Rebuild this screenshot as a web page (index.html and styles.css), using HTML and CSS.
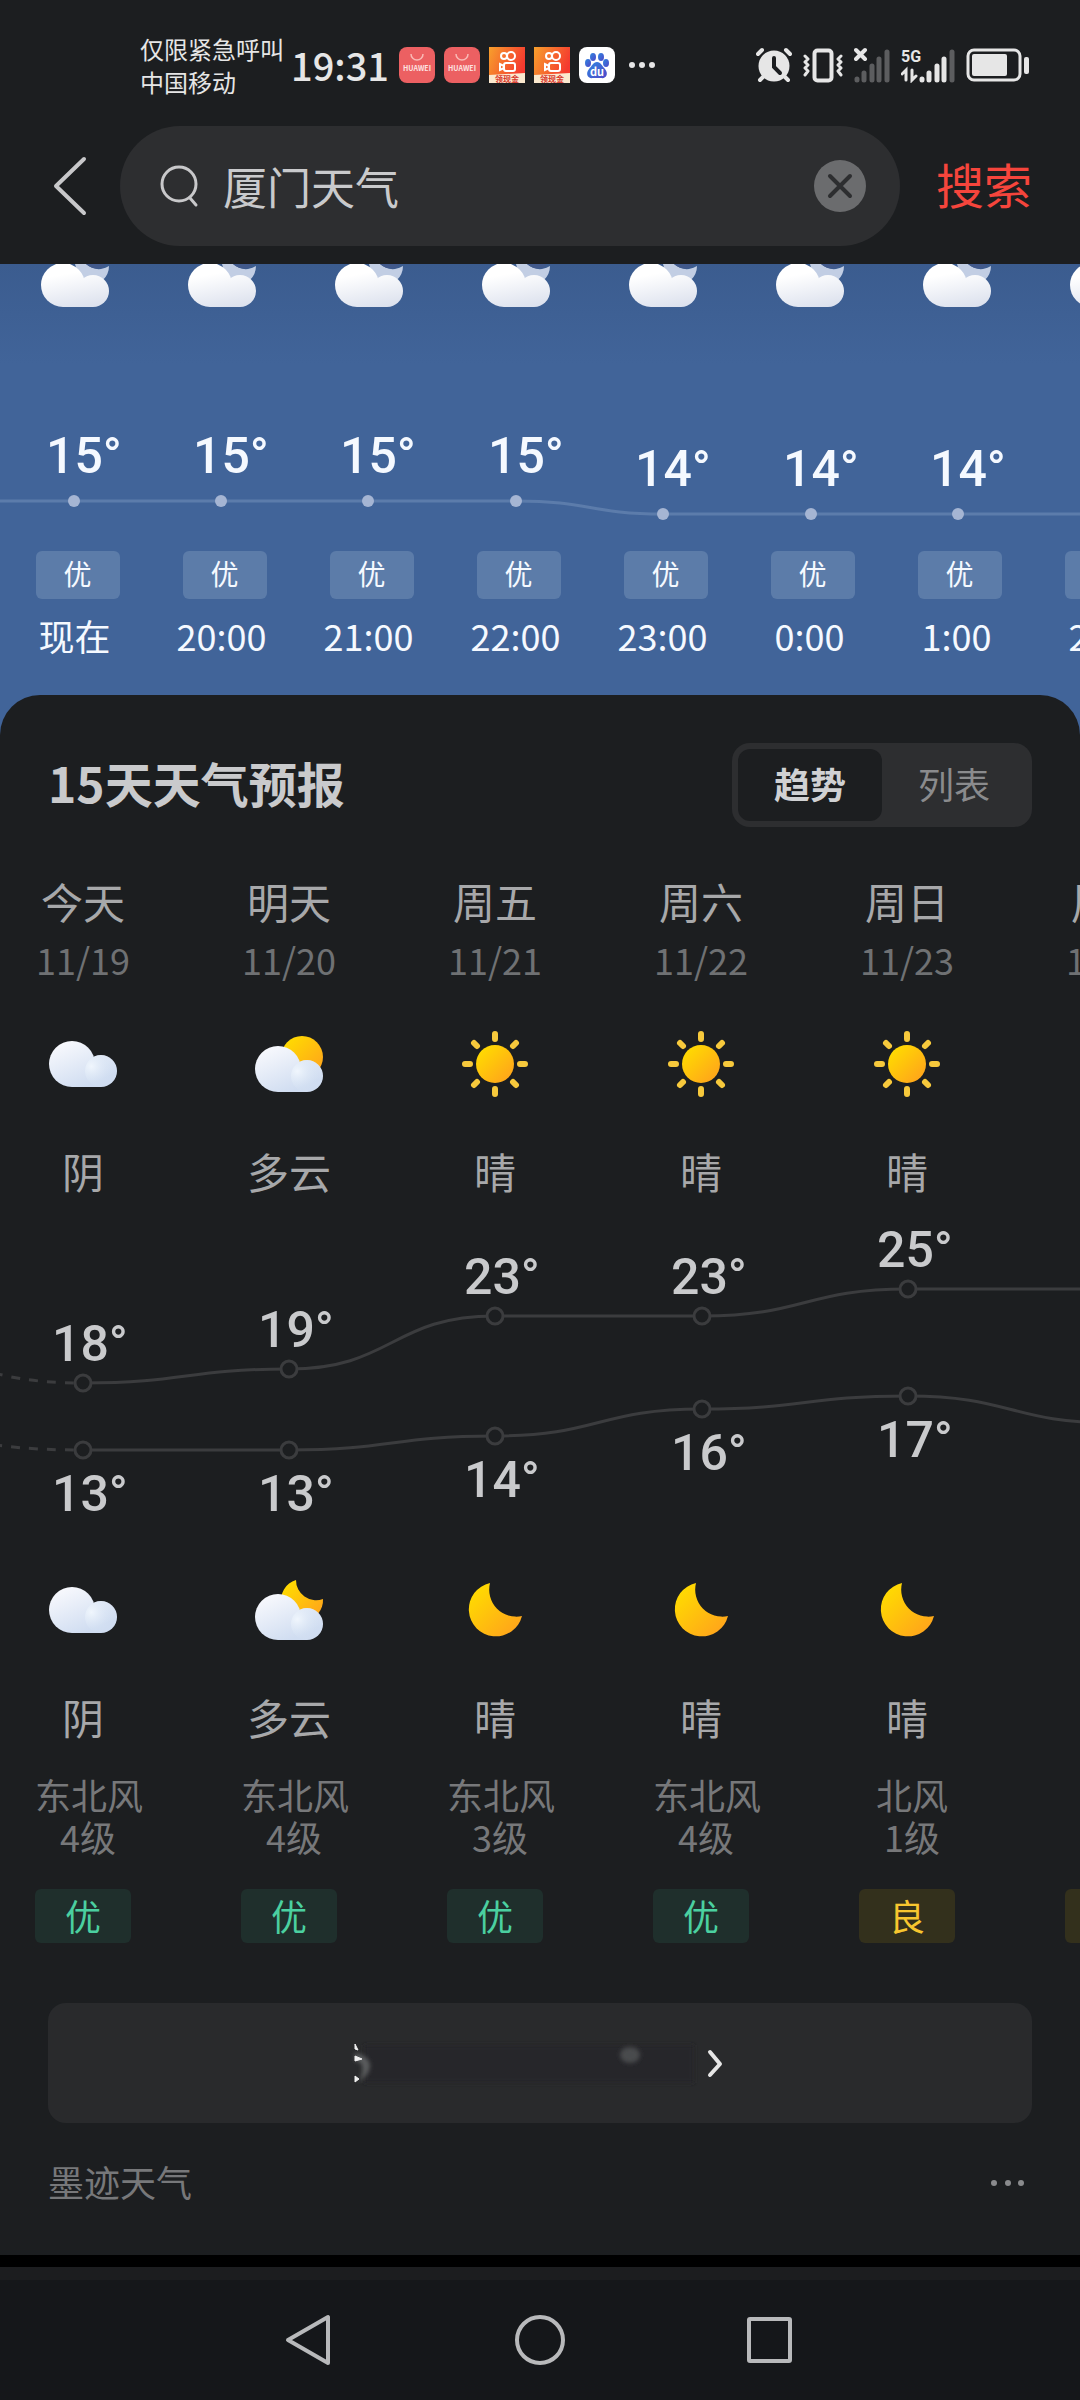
FILE: index.html
```html
<!DOCTYPE html>
<html lang="zh-CN">
<head>
    <meta charset="UTF-8">
    <meta name="viewport" content="width=device-width, initial-scale=1.0">
    <title>厦门天气</title>
    <link rel="stylesheet" href="styles.css">
</head>
<body>
    <!-- shared weather icons -->
    <svg class="defs" width="0" height="0" aria-hidden="true">
        <defs>
            <linearGradient id="gCloud" gradientUnits="userSpaceOnUse" x1="15" y1="0" x2="35" y2="46">
                <stop offset="0" stop-color="#f8f9fd"/>
                <stop offset="1" stop-color="#d0ddf1"/>
            </linearGradient>
            <radialGradient id="gPuff" cx="0.2" cy="0.35" r="0.7">
                <stop offset="0" stop-color="#f0f6fd"/>
                <stop offset="1" stop-color="#d3e1f2" stop-opacity="0"/>
            </radialGradient>
            <linearGradient id="gSun" x1="0.1" y1="0.1" x2="0.9" y2="0.9">
                <stop offset="0" stop-color="#ffdc00"/>
                <stop offset="1" stop-color="#ffa41b"/>
            </linearGradient>
            <linearGradient id="gWhite" gradientUnits="userSpaceOnUse" x1="30" y1="0" x2="38" y2="44">
                <stop offset="0.2" stop-color="#ffffff"/>
                <stop offset="1" stop-color="#dde2ee"/>
            </linearGradient>
            <symbol id="cloudShape" viewBox="0 0 68 46">
                <g fill="url(#gCloud)">
                    <circle cx="23" cy="23" r="23"/>
                    <circle cx="52" cy="30" r="16"/>
                    <rect x="23" y="23" width="29" height="23"/>
                </g>
                <circle cx="52" cy="30" r="16" fill="url(#gPuff)"/>
            </symbol>
            <symbol id="cloud" viewBox="0 0 72 72">
                <use href="#cloudShape" x="2" y="13" width="68" height="46"/>
            </symbol>
            <symbol id="cloudSun" viewBox="0 0 72 72">
                <circle cx="49" cy="29" r="21" fill="url(#gSun)"/>
                <use href="#cloudShape" x="2" y="18" width="68" height="46"/>
            </symbol>
            <symbol id="cloudMoon" viewBox="0 0 72 72">
                <path d="M43 6A21 21 0 1 0 70 25A20 20 0 0 1 43 6Z" fill="url(#gSun)"/>
                <use href="#cloudShape" x="2" y="20" width="68" height="46"/>
            </symbol>
            <symbol id="sun" viewBox="0 0 72 72">
                <circle cx="36" cy="36" r="19" fill="url(#gSun)"/>
                <path d="M36 6V11M36 61V66M6 36H11M61 36H66M15 15L18 18M54 54L57 57M57 15L54 18M18 54L15 57" stroke="#f7c93c" stroke-width="6" stroke-linecap="round"/>
            </symbol>
            <symbol id="moon" viewBox="0 0 72 72">
                <path d="M31 9A27 27 0 1 0 63 42A27 27 0 0 1 31 9Z" fill="url(#gSun)"/>
            </symbol>
            <symbol id="hourCloud" viewBox="0 0 68 44">
                <path d="M34 0H45Q52 6 60 5Q65 4 68 2Q68 10 62 16L58 22L40 20Z" fill="#c2cee4"/>
                <path d="M45 0H64Q64 3 60 4Q52 6 45 0Z" fill="#41598b"/>
                <g fill="url(#gWhite)">
                    <circle cx="22" cy="21" r="22"/>
                    <circle cx="52" cy="27" r="16"/>
                    <rect x="22" y="21" width="30" height="22"/>
                </g>
            </symbol>
            <linearGradient id="gKs" x1="0" y1="0" x2="1" y2="0.4">
                <stop offset="0" stop-color="#f7a02c"/>
                <stop offset="1" stop-color="#f5392f"/>
            </linearGradient>
            <linearGradient id="gDu" x1="0" y1="0" x2="1" y2="1">
                <stop offset="0" stop-color="#2f86e0"/>
                <stop offset="1" stop-color="#4f47c8"/>
            </linearGradient>
            <symbol id="appHuawei" viewBox="0 0 36 36">
                <rect width="36" height="36" rx="8" fill="#ec6062"/>
                <path d="M12 7A6 6 0 0 0 24 7" fill="none" stroke="#f9b9b5" stroke-width="1.500"/>
                <text x="18" y="24" text-anchor="middle" font-size="7" font-weight="700" fill="#fde3e1">HUAWEI</text>
            </symbol>
            <symbol id="appKs" viewBox="0 0 36 36">
                <rect width="36" height="36" fill="url(#gKs)"/>
                <g fill="none" stroke="#fff" stroke-width="2">
                    <circle cx="15" cy="9" r="3"/>
                    <circle cx="22" cy="9" r="4"/>
                    <rect x="15" y="16" width="11" height="8" rx="2"/>
                    <path d="M15 19L11 17V23L15 21"/>
                </g>
                <path d="M0 28L36 26V36H0Z" fill="#fbe9cf"/>
                <text x="18" y="35" text-anchor="middle" font-size="8" font-weight="700" fill="#d7352a">领现金</text>
            </symbol>
            <symbol id="appDu" viewBox="0 0 36 36">
                <rect width="36" height="36" rx="8" fill="#fff"/>
                <g fill="url(#gDu)">
                    <ellipse cx="14" cy="10" rx="3" ry="4"/>
                    <ellipse cx="22" cy="10" rx="3" ry="4"/>
                    <ellipse cx="9" cy="16" rx="3" ry="4"/>
                    <ellipse cx="27" cy="16" rx="3" ry="4"/>
                    <path d="M18 15C22 15 23 19 26 22C30 27 27 32 22 31H14C9 32 6 27 10 22C13 19 14 15 18 15Z"/>
                </g>
                <text x="18" y="29" text-anchor="middle" font-size="11" font-weight="700" fill="#fff">du</text>
            </symbol>
        </defs>
    </svg>

    <div class="statusbar">
        <div class="carrier">仅限紧急呼叫<br>中国移动</div>
        <div class="clock">19:31</div>
        <div class="apps">
            <svg width="36" height="36"><use href="#appHuawei"/></svg>
            <svg width="36" height="36"><use href="#appHuawei"/></svg>
            <svg width="36" height="36"><use href="#appKs"/></svg>
            <svg width="36" height="36"><use href="#appKs"/></svg>
            <svg width="36" height="36"><use href="#appDu"/></svg>
            <svg width="36" height="36" viewBox="0 0 36 36" fill="#e6e6e6">
                <circle cx="8" cy="18" r="3"/><circle cx="18" cy="18" r="3"/><circle cx="28" cy="18" r="3"/>
            </svg>
        </div>
        <div class="system">
            <!-- alarm -->
            <svg width="36" height="36" viewBox="0 0 36 36" fill="none" stroke-linecap="round">
                <circle cx="18" cy="19" r="15.500" fill="#e6e6e6"/>
                <path d="M2 7L6 3M34 7L30 3M7 30L4 33M29 30L32 33" stroke="#e6e6e6" stroke-width="4"/>
                <path d="M18 11V20L24 26" stroke="#1c1e20" stroke-width="4"/>
            </svg>
            <!-- vibrate -->
            <svg width="40" height="36" viewBox="0 0 40 36" fill="none" stroke="#e6e6e6" stroke-linecap="round" stroke-linejoin="round">
                <rect x="11.500" y="3.500" width="17" height="30" rx="3" stroke-width="4"/>
                <path d="M2 9L5 12L2 15L5 18L2 21L5 24L2 28M38 9L35 12L38 15L35 18L38 21L35 24L38 28" stroke-width="3"/>
            </svg>
            <!-- no signal -->
            <svg width="36" height="36" viewBox="0 0 36 36" fill="none" stroke-linecap="round">
                <path d="M3 32V33M10 26V33M18 19V33M25 12V33M33 5V33" stroke="#5c5d5f" stroke-width="5"/>
                <path d="M2 3L11 12M11 3L2 12" stroke="#e6e6e6" stroke-width="4"/>
            </svg>
            <!-- 5G -->
            <svg width="54" height="36" viewBox="0 0 54 36" fill="none" stroke-linecap="round">
                <path d="M21 32V33M28 26V33M36 19V33M43 12V33" stroke="#e6e6e6" stroke-width="5"/>
                <path d="M51 5V33" stroke="#5c5d5f" stroke-width="5"/>
                <text x="0" y="15" font-size="16" font-weight="700" fill="#e6e6e6" class="net">5G</text>
                <path d="M1 27L5 23V33M11 23V33L15 29" stroke="#e6e6e6" stroke-width="3"/>
            </svg>
            <!-- battery -->
            <svg width="64" height="36" viewBox="0 0 64 36">
                <rect x="2" y="3" width="52" height="30" rx="6" fill="none" stroke="#e6e6e6" stroke-width="3"/>
                <rect x="6" y="7" width="35" height="22" rx="2" fill="#e6e6e6"/>
                <rect x="58" y="10" width="5" height="17" rx="2" fill="#e6e6e6"/>
            </svg>
        </div>
    </div>

    <form class="search" onsubmit="return false">
        <button class="back" type="button" aria-label="返回">
            <svg width="36" height="64" viewBox="0 0 36 64" fill="none" stroke="#c8c8ca" stroke-width="4" stroke-linecap="round" stroke-linejoin="round">
                <path d="M32 5L4 32L32 59"/>
            </svg>
        </button>
        <div class="search-box">
            <svg width="40" height="44" viewBox="0 0 40 44" fill="none" stroke="#c8c8ca" stroke-width="3" stroke-linecap="round">
                <circle cx="19" cy="20" r="17"/>
                <path d="M30 34L36 41"/>
            </svg>
            <input class="search-input" type="text" value="厦门天气" aria-label="搜索">
            <button class="clear" type="reset" aria-label="清除">
                <svg width="52" height="52" viewBox="0 0 52 52">
                    <circle cx="26" cy="26" r="26" fill="#6b6c6e"/>
                    <path d="M16 16L36 36M36 16L16 36" stroke="#2d2e30" stroke-width="4" stroke-linecap="round"/>
                </svg>
            </button>
        </div>
        <button class="go" type="submit">搜索</button>
    </form>

    <main class="weather">
        <section class="hourly">
            <div class="hour-icons">
                <svg width="68" height="44"><use href="#hourCloud"/></svg>
                <svg width="68" height="44"><use href="#hourCloud"/></svg>
                <svg width="68" height="44"><use href="#hourCloud"/></svg>
                <svg width="68" height="44"><use href="#hourCloud"/></svg>
                <svg width="68" height="44"><use href="#hourCloud"/></svg>
                <svg width="68" height="44"><use href="#hourCloud"/></svg>
                <svg width="68" height="44"><use href="#hourCloud"/></svg>
                <svg width="68" height="44"><use href="#hourCloud"/></svg>
            </div>
            <svg class="hour-chart" width="1180" height="243">
                <path d="M0 193H516C590 193 590 206 663 206H1180" fill="none" stroke="#5c7cab" stroke-width="3"/>
                <g fill="#a5b5d3">
                    <circle cx="74" cy="193" r="6"/>
                    <circle cx="221" cy="193" r="6"/>
                    <circle cx="368" cy="193" r="6"/>
                    <circle cx="516" cy="193" r="6"/>
                    <circle cx="663" cy="206" r="6"/>
                    <circle cx="811" cy="206" r="6"/>
                    <circle cx="958" cy="206" r="6"/>
                </g>
                <g class="temp">
                    <text x="84" y="165">15°</text>
                    <text x="231" y="165">15°</text>
                    <text x="378" y="165">15°</text>
                    <text x="526" y="165">15°</text>
                    <text x="673" y="178">14°</text>
                    <text x="821" y="178">14°</text>
                    <text x="968" y="178">14°</text>
                </g>
            </svg>
            <ul class="hours">
                <li><span class="air">优</span><span>现在</span></li>
                <li><span class="air">优</span><span>20:00</span></li>
                <li><span class="air">优</span><span>21:00</span></li>
                <li><span class="air">优</span><span>22:00</span></li>
                <li><span class="air">优</span><span>23:00</span></li>
                <li><span class="air">优</span><span>0:00</span></li>
                <li><span class="air">优</span><span>1:00</span></li>
                <li><span class="air">优</span><span>2:00</span></li>
            </ul>
        </section>

        <section class="panel">
            <div class="panel-head">
                <h2>15天天气预报</h2>
                <div class="tabs">
                    <button class="tab active" type="button">趋势</button>
                    <button class="tab" type="button">列表</button>
                </div>
            </div>

            <ul class="days">
                <li><span class="day">今天</span><span class="date">11/19</span><svg width="72" height="72"><use href="#cloud"/></svg><span class="day">阴</span></li>
                <li><span class="day">明天</span><span class="date">11/20</span><svg width="72" height="72"><use href="#cloudSun"/></svg><span class="day">多云</span></li>
                <li><span class="day">周五</span><span class="date">11/21</span><svg width="72" height="72"><use href="#sun"/></svg><span class="day">晴</span></li>
                <li><span class="day">周六</span><span class="date">11/22</span><svg width="72" height="72"><use href="#sun"/></svg><span class="day">晴</span></li>
                <li><span class="day">周日</span><span class="date">11/23</span><svg width="72" height="72"><use href="#sun"/></svg><span class="day">晴</span></li>
                <li><span class="day">周一</span><span class="date">11/24</span></li>
            </ul>

            <svg class="day-chart" width="1240" height="377">
                <g fill="none" stroke="#3b3c3e" stroke-width="3">
                    <path d="M83 186C186 186 186 172 289 172S392 119 495 119H702C805 119 805 92 908 92H1240"/>
                    <path d="M83 253H289C392 253 392 239 495 239S599 212 702 212S805 199 908 199S1011 226 1114 226H1240"/>
                    <path d="M83 186C-20 186 -20 159 -123 159M83 253C-20 253 -20 239 -123 239" stroke-dasharray="9 9" stroke-dashoffset="-9"/>
                </g>
                <g fill="#1c1e20" stroke="#3b3c3e" stroke-width="3">
                    <circle cx="83" cy="186" r="8"/>
                    <circle cx="289" cy="172" r="8"/>
                    <circle cx="495" cy="119" r="8"/>
                    <circle cx="702" cy="119" r="8"/>
                    <circle cx="908" cy="92" r="8"/>
                    <circle cx="83" cy="253" r="8"/>
                    <circle cx="289" cy="253" r="8"/>
                    <circle cx="495" cy="239" r="8"/>
                    <circle cx="702" cy="212" r="8"/>
                    <circle cx="908" cy="199" r="8"/>
                </g>
                <g class="temp">
                    <text x="90" y="164">18°</text>
                    <text x="296" y="150">19°</text>
                    <text x="502" y="97">23°</text>
                    <text x="709" y="97">23°</text>
                    <text x="915" y="70">25°</text>
                    <text x="90" y="314">13°</text>
                    <text x="296" y="314">13°</text>
                    <text x="502" y="300">14°</text>
                    <text x="709" y="273">16°</text>
                    <text x="915" y="260">17°</text>
                </g>
            </svg>

            <ul class="days">
                <li><svg width="72" height="72"><use href="#cloud"/></svg><span class="day">阴</span><span class="wind">东北风<br>4级</span><span class="aqi">优</span></li>
                <li><svg width="72" height="72"><use href="#cloudMoon"/></svg><span class="day">多云</span><span class="wind">东北风<br>4级</span><span class="aqi">优</span></li>
                <li><svg width="72" height="72"><use href="#moon"/></svg><span class="day">晴</span><span class="wind">东北风<br>3级</span><span class="aqi">优</span></li>
                <li><svg width="72" height="72"><use href="#moon"/></svg><span class="day">晴</span><span class="wind">东北风<br>4级</span><span class="aqi">优</span></li>
                <li><svg width="72" height="72"><use href="#moon"/></svg><span class="day">晴</span><span class="wind">北风<br>1级</span><span class="aqi good">良</span></li>
                <li><span class="aqi good"></span></li>
            </ul>

            <button class="more" type="button" aria-label="查看更多">
                <svg width="380" height="60" viewBox="0 0 380 60">
                    <defs>
                        <filter id="soft" x="-50%" y="-50%" width="200%" height="200%"><feGaussianBlur stdDeviation="2"/></filter>
                    </defs>
                    <rect x="14" y="12" width="330" height="38" fill="#262729" filter="url(#soft)"/>
                    <path d="M5 20Q18 22 20 32Q20 42 8 49Q14 40 12 32Q10 28 5 28Z" fill="#5c5d5f" filter="url(#soft)"/>
                    <path d="M5 11L8 17L5 16ZM5 23L12 26L5 28ZM5 43L9 46L5 49Z" fill="#f0f0f0" stroke="#f0f0f0" stroke-width="1"/>
                    <ellipse cx="280" cy="22" rx="10" ry="8" fill="#4a4b4d" filter="url(#soft)"/>
                    <path d="M360 19L370 31L360 42" fill="none" stroke="#e6e6e6" stroke-width="4" stroke-linecap="round" stroke-linejoin="round"/>
                </svg>
            </button>

            <div class="source">
                <span>墨迹天气</span>
                <svg width="42" height="12" viewBox="0 0 42 12" fill="#8a8b8d">
                    <circle cx="4" cy="8" r="3"/><circle cx="18" cy="8" r="3"/><circle cx="31" cy="8" r="3"/>
                </svg>
            </div>
        </section>
    </main>

    <nav class="navbar">
        <button type="button" aria-label="返回">
            <svg width="56" height="56" viewBox="0 0 56 56"><path d="M46 5V51L6 28Z"/></svg>
        </button>
        <button type="button" aria-label="主页">
            <svg width="56" height="56" viewBox="0 0 56 56"><circle cx="28" cy="28" r="23"/></svg>
        </button>
        <button type="button" aria-label="最近">
            <svg width="56" height="56" viewBox="0 0 56 56"><rect x="7" y="7" width="41" height="42" rx="1"/></svg>
        </button>
    </nav>
</body>
</html>
```
FILE: styles.css
```css
*{
    box-sizing: border-box;
}
body{
    margin: 0;
    background-color: #1c1e20;
    color: #c9cacc;
    font-family: "Noto Sans CJK SC", sans-serif;
    overflow-x: hidden;
}
button, input{
    padding: 0;
    border: none;
    background: none;
    font-family: inherit;
    color: inherit;
}
ul{
    margin: 0;
    padding: 0;
    list-style: none;
}
svg{
    display: block;
    flex-shrink: 0;
}
.defs{
    position: absolute;
}

/* status bar */
.statusbar{
    display: flex;
    align-items: center;
    padding: 32px 50px 28px 140px;
    color: #e6e6e6;
}
.carrier{
    width: 151px;
    font-size: 24px;
    line-height: 33px;
    white-space: nowrap;
}
.clock{
    width: 108px;
    font-size: 38px;
    line-height: 48px;
    font-weight: 500;
}
.apps{
    display: flex;
    gap: 9px;
}
.system{
    display: flex;
    gap: 11px;
    margin-left: auto;
}
.net{
    font-family: "Roboto", sans-serif;
}

/* search */
.search{
    display: flex;
    align-items: center;
    padding: 0 48px 18px 52px;
}
.back{
    width: 68px;
}
.search-box{
    flex: 1;
    display: flex;
    align-items: center;
    height: 120px;
    padding: 0 34px 0 40px;
    border-radius: 60px;
    background-color: #2d2e30;
}
.search-input{
    flex: 1;
    min-width: 0;
    margin-left: 23px;
    font-size: 44px;
    line-height: 60px;
    outline: none;
}
.go{
    margin-left: 36px;
    padding-bottom: 6px;
    font-size: 48px;
    line-height: 60px;
    color: #f5453c;
}

/* hourly */
.weather{
    background-image: linear-gradient(#3b5c8f, #416499 100px);
}
.hourly{
    padding-bottom: 36px;
    color: #f5f9ff;
    overflow: hidden;
}
.hour-icons{
    display: flex;
    gap: 79px;
    padding-left: 41px;
}
.temp{
    font-family: "Roboto", "Noto Sans CJK SC", sans-serif;
    font-size: 50px;
    font-weight: 500;
    text-anchor: middle;
    fill: currentColor;
}
.hours{
    display: flex;
    padding-left: 1px;
}
.hours li{
    flex: 0 0 147px;
    display: flex;
    flex-direction: column;
    align-items: center;
    gap: 12px;
    font-size: 36px;
    line-height: 48px;
}
.air{
    width: 84px;
    height: 48px;
    margin-left: 6px;
    border-radius: 6px;
    font-size: 28px;
    line-height: 44px;
    text-align: center;
    background-color: #5c7ca9;
}

/* 15 days */
.panel{
    padding: 48px 0 50px;
    border-radius: 40px 40px 0 0;
    background-color: #1c1e20;
    overflow: hidden;
}
.panel-head{
    display: flex;
    align-items: center;
    justify-content: space-between;
    padding: 0 48px;
    margin-bottom: 50px;
}
.panel-head h2{
    margin: 0;
    padding-bottom: 6px;
    font-size: 48px;
    line-height: 60px;
    font-weight: 700;
}
.tabs{
    display: flex;
    padding: 6px;
    border-radius: 18px;
    background-color: #2d2e30;
}
.tab{
    width: 144px;
    height: 72px;
    padding-bottom: 4px;
    border-radius: 12px;
    font-size: 36px;
    color: #8a8b8d;
}
.tab.active{
    font-weight: 700;
    color: #d0d1d3;
    background-color: #1c1e20;
}
.days{
    display: flex;
    gap: 110px;
    padding-left: 35px;
}
.days li{
    flex: 0 0 96px;
    min-width: 0;
    display: flex;
    flex-direction: column;
    align-items: center;
    white-space: nowrap;
}
.day{
    font-size: 42px;
    line-height: 48px;
    color: #a7a8aa;
}
.date{
    margin: 13px 0 48px;
    font-size: 36px;
    line-height: 42px;
    color: #6f7173;
}
.days svg{
    margin-bottom: 47px;
}
.day-chart{
    margin-top: 2px;
    color: #c9cacc;
}
.wind{
    width: 106px;
    margin: 32px -10px 32px 0;
    font-size: 36px;
    line-height: 42px;
    text-align: center;
    color: #77787a;
}
.aqi{
    width: 96px;
    height: 54px;
    margin-top: auto;
    border-radius: 6px;
    font-size: 36px;
    line-height: 52px;
    text-align: center;
    color: #4bd0a0;
    background-color: #1f2f2c;
}
.aqi.good{
    color: #f7c62f;
    background-color: #33301c;
}
.more{
    display: flex;
    align-items: center;
    justify-content: center;
    width: calc(100% - 96px);
    height: 120px;
    margin: 60px 48px 34px;
    border-radius: 18px;
    background-color: #292a2c;
}
.source{
    display: flex;
    align-items: center;
    justify-content: space-between;
    padding: 0 48px;
    font-size: 36px;
    line-height: 48px;
    color: #77787a;
}

/* bottom navigation */
.navbar{
    display: flex;
    justify-content: center;
    gap: 174px;
    padding: 45px 0 32px;
    border-top: 12px solid #000;
    background-image: linear-gradient(#1c1d1f 13px, #15171a 13px);
}
.navbar svg{
    fill: none;
    stroke: #b8b9bb;
    stroke-width: 4;
    stroke-linejoin: round;
}
```
